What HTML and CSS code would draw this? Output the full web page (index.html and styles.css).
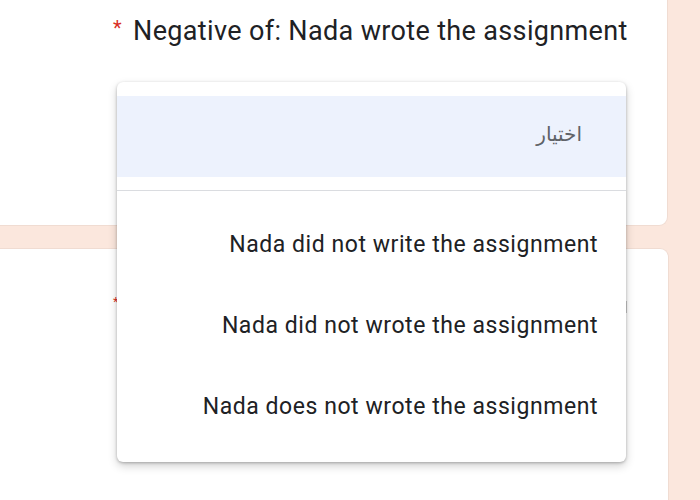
FILE: index.html
```html
<!DOCTYPE html>
<html lang="en">
<head>
    <meta charset="UTF-8">
    <title>Negative of</title>
    <link rel="stylesheet" href="styles.css">
</head>
<body>
    <div class="page">
        <!-- question card -->
        <div class="card card-top">
            <h2 class="question"><span class="req">*</span> Negative of: Nada wrote the assignment</h2>
        </div>

        <!-- next question card, mostly hidden by the menu -->
        <div class="card card-next">
            <span class="req small">*</span>
            <span class="edge-mark"></span>
        </div>

        <!-- open select menu -->
        <div class="menu">
            <div class="menu-option placeholder" dir="rtl" lang="ar">اختيار</div>
            <div class="menu-sep"></div>
            <div class="menu-option">Nada did not write the assignment</div>
            <div class="menu-option">Nada did not wrote the assignment</div>
            <div class="menu-option">Nada does not wrote the assignment</div>
        </div>
    </div>
</body>
</html>
```

FILE: styles.css
```css
body {
    margin: 0;
    background-color: #fbe7dd;
    font-family: Roboto, "Noto Sans", sans-serif;
    color: #202124;
    overflow: hidden;
}

.page {
    position: relative;
    width: 700px;
    height: 500px;
    display: flex;
    flex-direction: column;
    gap: 22px;
}

.card {
    background-color: #fff;
    width: 668px;
    border-right: 1px solid #f0dcd2;
}

.card-top {
    height: 226px;
    border-bottom-right-radius: 9px;
    border-bottom: 1px solid #f0dcd2;
    box-sizing: border-box;
}

.card-next {
    flex: 1;
    border-top-right-radius: 9px;
    border-top: 1px solid #f0dcd2;
    position: relative;
}

.question {
    margin: 0;
    padding: 15px 0 0 113px;
    font-weight: 400;
    font-size: 27px;
    letter-spacing: 0.35px;
    color: #202124;
}

.req {
    color: #d93025;
    font-size: 20px;
    vertical-align: 5px;
    margin-right: 4px;
}

.req.small {
    position: absolute;
    left: 113px;
    top: 45px;
    font-size: 13px;
}

.edge-mark {
    position: absolute;
    left: 625px;
    top: 52px;
    width: 2px;
    height: 12px;
    background-color: #c8c8c8;
}

.menu {
    position: absolute;
    left: 117px;
    top: 82px;
    width: 509px;
    height: 380px;
    box-sizing: border-box;
    padding-top: 14px;
    background-color: #fff;
    border-radius: 6px;
    box-shadow: 0 1px 3px rgba(0, 0, 0, 0.25), 0 4px 10px rgba(0, 0, 0, 0.18);
}

.menu-option {
    height: 81px;
    display: flex;
    align-items: center;
    justify-content: flex-end;
    padding-right: 28px;
    font-size: 23px;
    letter-spacing: 0.55px;
    color: #202124;
}

.menu-option.placeholder {
    justify-content: flex-start;
    padding-right: 44px;
    background-color: #edf2fd;
    font-family: "DejaVu Sans", sans-serif;
    font-size: 20px;
    letter-spacing: 0;
    color: #5f6368;
    padding-bottom: 6px;
    box-sizing: border-box;
}

.menu-sep {
    margin-top: 13px;
    border-top: 1px solid #dadce0;
    height: 0;
    margin-bottom: 13px;
}
```
